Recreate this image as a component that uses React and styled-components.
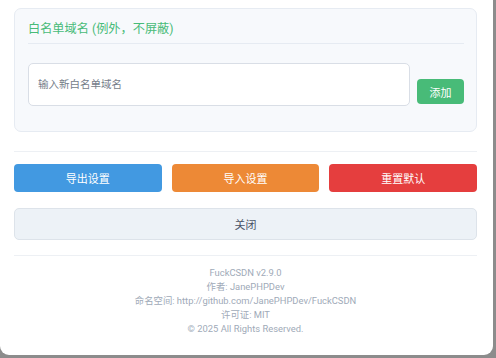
import React from "react";
import styled, { createGlobalStyle } from "styled-components";

const Global = createGlobalStyle`
  html, body { margin: 0; padding: 0; background: #8c8c8c; height: 358px; overflow: hidden; }
  * { box-sizing: border-box; }
  body { font-family: Roboto, "Noto Sans CJK SC", sans-serif; }
`;

const Modal = styled.div`
  width: 493px;
  height: 355px;
  background: #fff;
  border-radius: 0 0 9px 9px;
  padding: 8px 16px 0 14px;
  display: flex;
  flex-direction: column;
`;

const Card = styled.section`
  background: #f7f9fc;
  border: 1px solid #e6ebf2;
  border-radius: 7px;
  padding: 12px 12px 25px 13px;
  display: flex;
  flex-direction: column;
`;

const CardTitle = styled.h3`
  margin: 0;
  font-size: 12.2px;
  font-weight: 400;
  color: #48bb78;
  line-height: 16px;
  padding-bottom: 6px;
  border-bottom: 1px solid #e6ebf2;
`;

const InputRow = styled.div`
  display: flex;
  align-items: flex-end;
  gap: 7px;
  margin-top: 19px;
`;

const TextInput = styled.input`
  flex: 1;
  height: 43px;
  border: 1px solid #d9dee6;
  border-radius: 5px;
  background: #fff;
  padding: 0 9px;
  font-family: Roboto, "Noto Sans CJK SC", sans-serif;
  font-size: 10.5px;
  color: #4a5568;
  outline: none;
  &::placeholder { color: #757d89; }
`;

const AddButton = styled.button`
  width: 47px;
  height: 25px;
  margin-bottom: 2px;
  border: none;
  border-radius: 4px;
  background: #48bb78;
  color: #fff;
  font-family: Roboto, "Noto Sans CJK SC", sans-serif;
  font-size: 11px;
  padding: 0;
`;

const Divider = styled.hr`
  border: none;
  border-top: 1px solid #edf0f4;
  margin: ${(p) => p.$m};
  width: 100%;
`;

const ActionRow = styled.div`
  display: grid;
  grid-template-columns: repeat(3, 1fr);
  gap: 10px;
`;

const ActionButton = styled.button`
  height: 28px;
  border: none;
  border-radius: 4px;
  background: ${(p) => p.$bg};
  color: #fff;
  font-family: Roboto, "Noto Sans CJK SC", sans-serif;
  font-size: 11px;
  padding: 0;
`;

const CloseButton = styled.button`
  margin-top: 16px;
  height: 32px;
  width: 100%;
  border: 1px solid #dde3ea;
  border-radius: 5px;
  background: #edf2f7;
  color: #4a5568;
  font-family: Roboto, "Noto Sans CJK SC", sans-serif;
  font-size: 11px;
  padding: 0;
`;

const Footer = styled.footer`
  text-align: center;
  color: #a0aab8;
  font-size: 9.4px;
  line-height: 14px;
`;

export default function App() {
  return (
    <>
      <Global />
      <Modal>
        <Card>
          <CardTitle>白名单域名 (例外，不屏蔽)</CardTitle>
          <InputRow>
            <TextInput placeholder="输入新白名单域名" />
            <AddButton>添加</AddButton>
          </InputRow>
        </Card>
        <Divider $m="19px 0 12px" />
        <ActionRow>
          <ActionButton $bg="#4299e1">导出设置</ActionButton>
          <ActionButton $bg="#ed8936">导入设置</ActionButton>
          <ActionButton $bg="#e53e3e">重置默认</ActionButton>
        </ActionRow>
        <CloseButton>关闭</CloseButton>
        <Divider $m="15px 0 10px" />
        <Footer>
          <div>FuckCSDN v2.9.0</div>
          <div>作者: JanePHPDev</div>
          <div>命名空间: http://github.com/JanePHPDev/FuckCSDN</div>
          <div>许可证: MIT</div>
          <div>© 2025 All Rights Reserved.</div>
        </Footer>
      </Modal>
    </>
  );
}
